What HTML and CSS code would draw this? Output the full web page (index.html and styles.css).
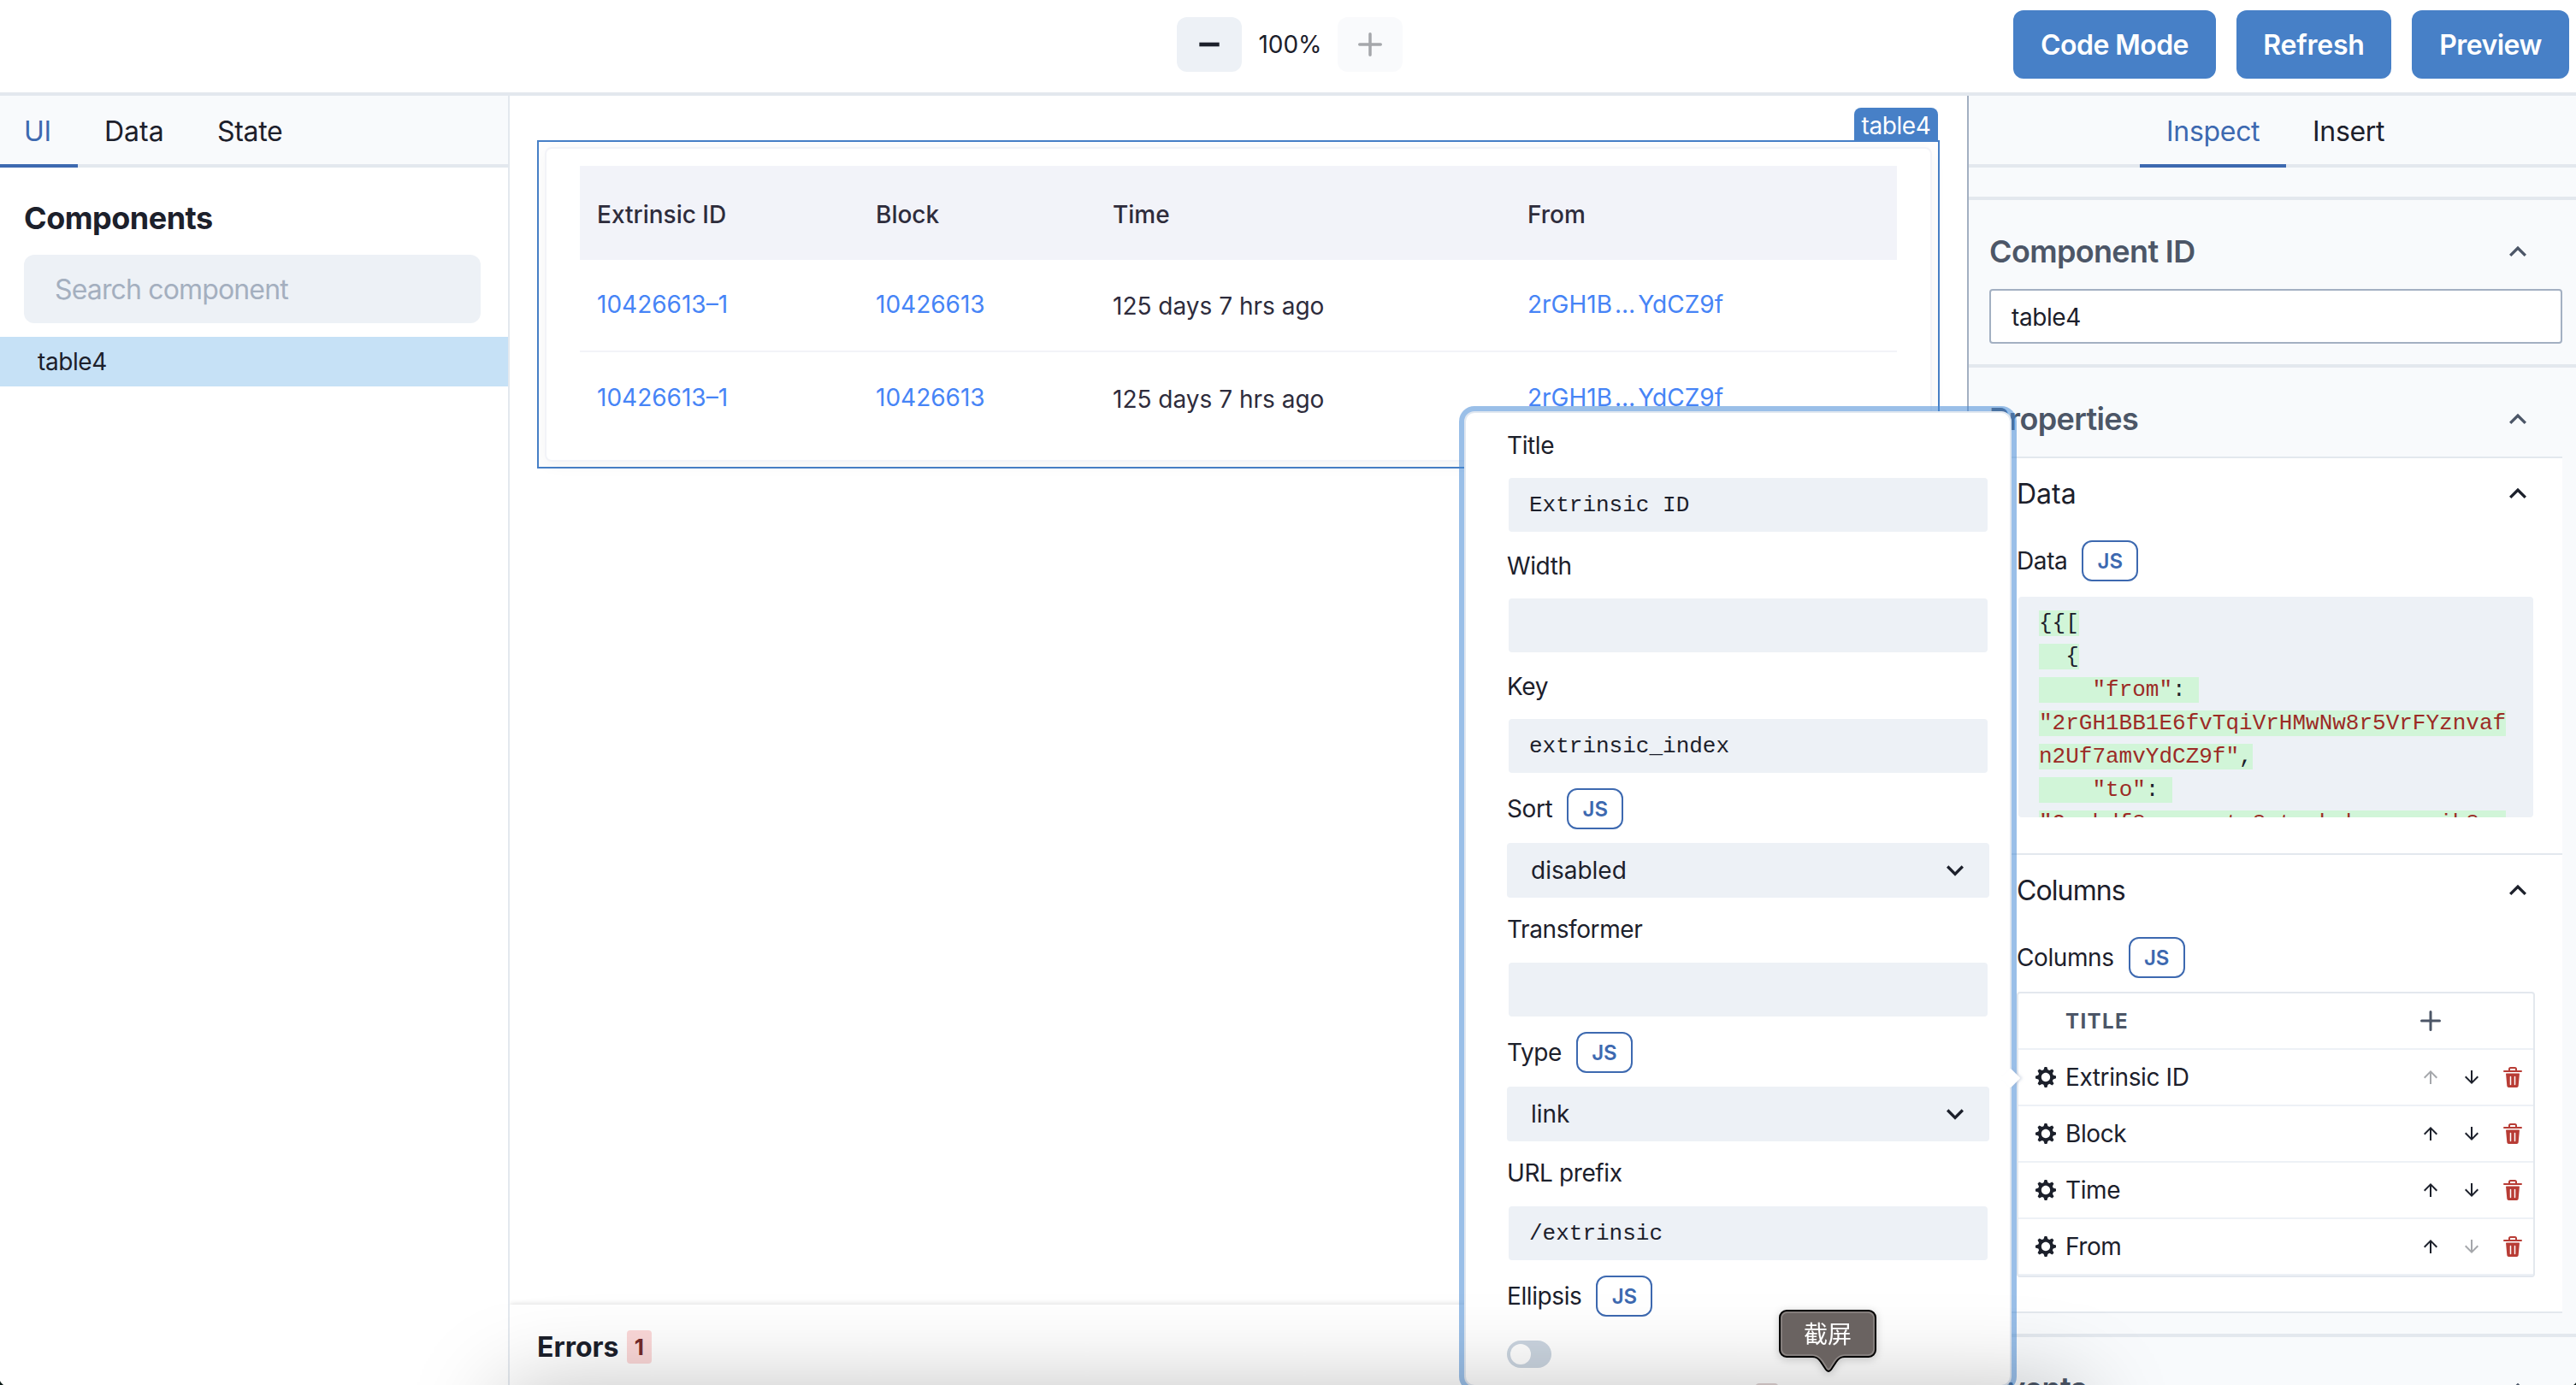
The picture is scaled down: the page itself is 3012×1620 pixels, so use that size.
FILE: index.html
```html
<!DOCTYPE html>
<html lang="en">
<head>
    <meta charset="UTF-8">
    <meta name="viewport" content="width=device-width, initial-scale=1.0">
    <title>Editor</title>
    <link rel="stylesheet" href="styles.css">
</head>
<body>
    <svg class="sprite" width="0" height="0">
        <symbol id="chevron-up" viewBox="0 0 24 24"><path d="M12 8.2l-6 6 1.41 1.41L12 11.03l4.59 4.58L18 14.2z"/></symbol>
        <symbol id="chevron-down" viewBox="0 0 24 24"><path d="M16.59 8.59L12 13.17 7.41 8.59 6 10l6 6 6-6z"/></symbol>
        <symbol id="plus" viewBox="0 0 24 24"><path d="M0,12a1.5,1.5,0,0,0,1.5,1.5h8.75a.25.25,0,0,1,.25.25V22.5a1.5,1.5,0,0,0,3,0V13.75a.25.25,0,0,1,.25-.25H22.5a1.5,1.5,0,0,0,0-3H13.75a.25.25,0,0,1-.25-.25V1.5a1.5,1.5,0,0,0-3,0v8.75a.25.25,0,0,1-.25.25H1.5A1.5,1.5,0,0,0,0,12Z"/></symbol>
        <symbol id="minus" viewBox="0 0 24 24"><rect x="2" y="10" width="20" height="4"/></symbol>
        <symbol id="arrow-up" viewBox="0 0 24 24"><path d="M4 12l1.41 1.41L11 7.83V20h2V7.83l5.58 5.59L20 12l-8-8-8 8z"/></symbol>
        <symbol id="arrow-down" viewBox="0 0 24 24"><path d="M20 12l-1.41-1.41L13 16.17V4h-2v12.17l-5.58-5.59L4 12l8 8 8-8z"/></symbol>
        <symbol id="gear" viewBox="0 0 14 14"><path fill-rule="evenodd" d="M14,7.77 L14,6.17 L12.06,5.53 L11.61,4.44 L12.49,2.6 L11.36,1.47 L9.55,2.38 L8.46,1.93 L7.77,0.01 L6.17,0.01 L5.54,1.95 L4.43,2.4 L2.59,1.52 L1.46,2.65 L2.37,4.46 L1.92,5.55 L0,6.23 L0,7.82 L1.94,8.46 L2.39,9.55 L1.51,11.39 L2.64,12.52 L4.45,11.61 L5.54,12.06 L6.23,13.98 L7.82,13.98 L8.45,12.04 L9.56,11.59 L11.4,12.47 L12.53,11.34 L11.61,9.53 L12.08,8.44 L14,7.75 Z M7,10 C5.34,10 4,8.66 4,7 C4,5.34 5.34,4 7,4 C8.66,4 10,5.34 10,7 C10,8.66 8.66,10 7,10 Z"/></symbol>
        <symbol id="trash" viewBox="0 0 24 24"><path d="M19.452 7.5H4.547a.5.5 0 00-.5.545l1.287 14.136A2 2 0 007.326 24h9.347a2 2 0 001.992-1.819L19.95 8.045a.5.5 0 00-.129-.382.5.5 0 00-.369-.163zm-9.2 13a.75.75 0 01-1.5 0v-9a.75.75 0 011.5 0zm5 0a.75.75 0 01-1.5 0v-9a.75.75 0 011.5 0zM22 4h-4.75a.25.25 0 01-.25-.25V2.5A2.5 2.5 0 0014.5 0h-5A2.5 2.5 0 007 2.5v1.25a.25.25 0 01-.25.25H2a1 1 0 000 2h20a1 1 0 000-2zM9 3.75V2.5a.5.5 0 01.5-.5h5a.5.5 0 01.5.5v1.25a.25.25 0 01-.25.25h-5.5A.25.25 0 019 3.75z"/></symbol>
    </svg>

    <header class="header">
        <div class="zoom">
            <button class="zoom-btn"><svg class="icon-28"><use href="#minus"/></svg></button>
            <span class="zoom-value">100%</span>
            <button class="zoom-btn disabled"><svg class="icon-28"><use href="#plus"/></svg></button>
        </div>
        <div class="actions">
            <button class="btn btn-code">Code Mode</button>
            <button class="btn btn-refresh">Refresh</button>
            <button class="btn btn-preview">Preview</button>
        </div>
    </header>

    <div class="workspace">
        <aside class="left-panel">
            <nav class="tabs">
                <a class="tab tab-ui active">UI</a>
                <a class="tab tab-data">Data</a>
                <a class="tab">State</a>
            </nav>
            <h2 class="panel-title">Components</h2>
            <div class="search">Search component</div>
            <div class="tree-item">table4</div>
        </aside>

        <main class="canvas">
            <div class="component">
                <span class="component-tag">table4</span>
                <div class="card">
                    <table class="data-table">
                        <thead>
                            <tr><th class="col-id">Extrinsic ID</th><th class="col-block">Block</th><th class="col-time">Time</th><th>From</th></tr>
                        </thead>
                        <tbody>
                            <tr><td><a>10426613–1</a></td><td><a>10426613</a></td><td>125 days 7 hrs ago</td><td><a class="hash">2rGH1B<i>…</i>YdCZ9f</a></td></tr>
                            <tr><td><a>10426613–1</a></td><td><a>10426613</a></td><td>125 days 7 hrs ago</td><td><a class="hash">2rGH1B<i>…</i>YdCZ9f</a></td></tr>
                        </tbody>
                    </table>
                </div>
            </div>
            <div class="errors">
                <span class="errors-title">Errors</span>
                <span class="errors-count">1</span>
            </div>
        </main>

        <aside class="right-panel">
            <nav class="tabs tabs-right">
                <a class="tab tab-inspect active">Inspect</a>
                <a class="tab tab-insert">Insert</a>
            </nav>
            <section class="section section-first">
                <h3 class="section-head">Component ID <svg class="icon-40"><use href="#chevron-up"/></svg></h3>
                <div class="id-input">table4</div>
            </section>
            <section class="section section-props">
                <h3 class="section-head">Properties <svg class="icon-40"><use href="#chevron-up"/></svg></h3>
                <div class="props">
                    <div class="prop">
                        <h4 class="prop-head">Data <svg class="icon-40"><use href="#chevron-up"/></svg></h4>
                        <div class="label-row prop-label">Data <button class="js-btn">JS</button></div>
                        <div class="code">
                            <pre><mark>{{[</mark></pre>
                            <pre><mark>  {</mark></pre>
                            <pre><mark>    <b>"from"</b>: </mark></pre>
                            <pre><mark><b>"2rGH1BB1E6fvTqiVrHMwNw8r5VrFYznvaf</b></mark></pre>
                            <pre><mark><b>n2Uf7amvYdCZ9f"</b>,</mark></pre>
                            <pre><mark>    <b>"to"</b>: </mark></pre>
                            <pre><mark><b>"2rxhdf8arxwnqtm8wtqrbvhxunmsaib8xq</b></mark></pre>
                        </div>
                    </div>
                    <div class="prop prop-columns">
                        <h4 class="prop-head">Columns <svg class="icon-40"><use href="#chevron-up"/></svg></h4>
                        <div class="label-row prop-label">Columns <button class="js-btn">JS</button></div>
                        <div class="columns">
                            <div class="col-row col-head"><span></span><span>TITLE</span><svg class="icon-24"><use href="#plus"/></svg></div>
                            <div class="col-row">
                                <svg class="icon-24"><use href="#gear"/></svg><span>Extrinsic ID</span>
                                <svg class="icon-24 off"><use href="#arrow-up"/></svg><svg class="icon-24"><use href="#arrow-down"/></svg><svg class="icon-24 del"><use href="#trash"/></svg>
                            </div>
                            <div class="col-row">
                                <svg class="icon-24"><use href="#gear"/></svg><span>Block</span>
                                <svg class="icon-24"><use href="#arrow-up"/></svg><svg class="icon-24"><use href="#arrow-down"/></svg><svg class="icon-24 del"><use href="#trash"/></svg>
                            </div>
                            <div class="col-row">
                                <svg class="icon-24"><use href="#gear"/></svg><span>Time</span>
                                <svg class="icon-24"><use href="#arrow-up"/></svg><svg class="icon-24"><use href="#arrow-down"/></svg><svg class="icon-24 del"><use href="#trash"/></svg>
                            </div>
                            <div class="col-row">
                                <svg class="icon-24"><use href="#gear"/></svg><span>From</span>
                                <svg class="icon-24"><use href="#arrow-up"/></svg><svg class="icon-24 off"><use href="#arrow-down"/></svg><svg class="icon-24 del"><use href="#trash"/></svg>
                            </div>
                        </div>
                    </div>
                </div>
            </section>
            <section class="section">
                <h3 class="section-head">Events <svg class="icon-40"><use href="#chevron-up"/></svg></h3>
            </section>
        </aside>
    </div>

    <div class="popover">
        <label class="label">Title</label>
        <div class="field">Extrinsic ID</div>
        <label class="label">Width</label>
        <div class="field"></div>
        <label class="label">Key</label>
        <div class="field">extrinsic_index</div>
        <div class="label-row">Sort <button class="js-btn">JS</button></div>
        <div class="select">disabled <svg class="icon-40"><use href="#chevron-down"/></svg></div>
        <label class="label">Transformer</label>
        <div class="field"></div>
        <div class="label-row">Type <button class="js-btn">JS</button></div>
        <div class="select">link <svg class="icon-40"><use href="#chevron-down"/></svg></div>
        <label class="label">URL prefix</label>
        <div class="field">/extrinsic</div>
        <div class="label-row">Ellipsis <button class="js-btn">JS</button></div>
        <div class="switch"></div>
        <span class="popover-arrow"></span>
    </div>

    <div class="dock-shadow"></div>
    <div class="dock-icon"></div>
    <div class="dock-tip">
        <svg class="dock-tip-shape" viewBox="0 0 114 74">
            <path d="M9 1H105a8 8 0 0 1 8 8V47a8 8 0 0 1-8 8H77C72 55 70 57 67 61L61 70Q58 74 55 70L49 61C46 57 44 55 39 55H9a8 8 0 0 1-8-8V9a8 8 0 0 1 8-8z" fill="#6a6361" stroke="#000" stroke-width="2"/>
            <path d="M10 3H104a7 7 0 0 1 7 7V46a7 7 0 0 1-7 7H77C71 53 68 56 65 60L60 68Q58 71 56 68L51 60C48 56 45 53 39 53H10a7 7 0 0 1-7-7V10a7 7 0 0 1 7-7z" fill="none" stroke="#8c8684" stroke-width="1.5"/>
        </svg>
        <span class="dock-tip-text">截屏</span>
    </div>
    <div class="corner"></div>
    <div class="corner corner-right"></div>
</body>
</html>
```
FILE: styles.css
```css
* {
    box-sizing: border-box;
}
html {
    overflow: hidden;
}
body {
    margin: 0;
    width: 3012px;
    height: 1620px;
    overflow: hidden;
    position: relative;
    display: flex;
    flex-direction: column;
    background: #fff;
    color: #1c202b;
    font-family: Inter, "Noto Sans CJK SC", sans-serif;
    font-size: 28px;
    letter-spacing: -0.4px;
}
h2, h3, h4, pre {
    margin: 0;
}
pre {
    font: inherit;
}
button {
    padding: 0;
    border: none;
    font-family: inherit;
    color: inherit;
}
svg {
    display: block;
    flex: none;
    fill: currentColor;
}
.sprite {
    position: absolute;
}
.icon-24 {
    width: 24px;
    height: 24px;
}
.icon-28 {
    width: 28px;
    height: 28px;
}
.icon-40 {
    width: 40px;
    height: 40px;
}

/* header */
.header {
    flex: none;
    height: 112px;
    padding: 0 8px 4px 1376px;
    display: flex;
    align-items: center;
    justify-content: space-between;
    border-bottom: 4px solid #e3e8ee;
}
.zoom {
    display: flex;
    align-items: center;
    width: 264px;
}
.zoom-btn {
    width: 76px;
    height: 64px;
    display: flex;
    align-items: center;
    justify-content: center;
    border-radius: 12px;
    background: #edf1f6;
}
.zoom-btn.disabled {
    background: #f9fafc;
    color: #a5a7ab;
}
.zoom-value {
    flex: 1;
    padding-left: 1px;
    text-align: center;
    letter-spacing: 0;
}
.actions {
    display: flex;
    gap: 24px;
}
.btn {
    height: 80px;
    border-radius: 12px;
    background: #4780c7;
    color: #fff;
    font-size: 32px;
    font-weight: 600;
    letter-spacing: -0.55px;
}
.btn-code {
    width: 237px;
}
.btn-refresh {
    width: 181px;
    letter-spacing: -0.2px;
}
.btn-preview {
    width: 184px;
}

.workspace {
    flex: 1;
    min-height: 0;
    display: grid;
    grid-template-columns: 596px 1704px 712px;
}

/* tabs */
.tabs {
    flex: none;
    height: 84px;
    display: flex;
    background: #f8fafc;
    border-bottom: 4px solid #e3e8ee;
    font-size: 32px;
}
.tab {
    height: 84px;
    padding: 2px 0 0 31px;
    display: flex;
    align-items: center;
    border-bottom: 4px solid transparent;
    letter-spacing: -0.3px;
}
.tab.active {
    color: #3d69b0;
    border-color: #3d69b0;
}
.tab-ui {
    width: 91px;
    padding-left: 28px;
}
.tab-data {
    width: 132px;
    letter-spacing: 0;
}
.tabs-right {
    padding-left: 200px;
}
.tab-inspect {
    width: 171px;
}

/* left panel */
.left-panel {
    border-right: 2px solid #e3e8ee;
}
.panel-title {
    padding: 37px 0 20px 28px;
    font-size: 36px;
    line-height: 45px;
    letter-spacing: -0.5px;
}
.search {
    margin: 0 32px 16px 28px;
    height: 80px;
    padding-left: 36px;
    border-radius: 12px;
    background: #edf1f6;
    color: #a4afbf;
    font-size: 32px;
    line-height: 82px;
    letter-spacing: -0.85px;
}
.tree-item {
    height: 58px;
    padding-left: 44px;
    background: #c6e1f6;
    line-height: 58px;
}

/* canvas */
.canvas {
    min-width: 0;
    height: 1508px;
    display: flex;
    flex-direction: column;
    justify-content: space-between;
    padding-top: 52px;
}
.component {
    position: relative;
    margin: 0 32px;
    height: 384px;
    padding: 6px 7px;
    border: 2px solid #4780c7;
    background: #fefefe;
}
.component-tag {
    position: absolute;
    right: 0;
    bottom: 380px;
    width: 98px;
    height: 40px;
    border-radius: 8px 8px 0 0;
    background: #4780c7;
    color: #fff;
    line-height: 42px;
    text-align: center;
}
.card {
    height: 368px;
    padding: 20px 39px 0;
    border: 2px solid #f2f3f8;
    border-radius: 8px;
    background: #fff;
    box-shadow: 0 4px 20px rgba(0, 0, 0, 0.04);
}
.data-table {
    width: 1540px;
    border-collapse: separate;
    border-spacing: 0;
    table-layout: fixed;
    color: #2e2c3c;
    letter-spacing: 0;
    text-align: left;
}
.data-table th {
    height: 110px;
    padding: 4px 0 0 20px;
    background: #f2f3f9;
    font-weight: 500;
}
.data-table td {
    height: 108px;
    padding: 2px 0 0 20px;
    border-bottom: 2px solid #f2f3f8;
}
.data-table tr:last-child td {
    border-bottom: none;
}
.data-table a {
    display: block;
    margin-top: -4px;
    color: #4684f6;
}
.data-table i {
    font-style: normal;
    letter-spacing: 3px;
    margin-left: 3px;
}
.data-table .col-id {
    width: 326px;
}
.data-table .col-block {
    width: 277px;
}
.data-table .col-time {
    width: 485px;
}
.errors {
    height: 94px;
    padding: 4px 0 0 32px;
    display: flex;
    align-items: center;
    gap: 9px;
    background: #fff;
    box-shadow: 0 -1px 6px rgba(0, 0, 0, 0.12);
    clip-path: inset(-20px 0 0 0);
}
.errors-title {
    font-size: 32px;
    font-weight: 700;
    letter-spacing: 0;
}
.errors-count {
    width: 29px;
    height: 39px;
    border-radius: 4px;
    background: #fbd8d8;
    color: #742a2a;
    font-size: 26px;
    font-weight: 700;
    line-height: 40px;
    text-align: center;
}

/* right panel */
.right-panel {
    min-width: 0;
    height: 1508px;
    overflow: hidden;
    border-left: 2px solid #a3b0c2;
    background: #f8fafc;
}
.section {
    padding: 16px 16px 0 24px;
    border-top: 4px solid #e3e8ee;
}
.section-first {
    margin-top: 34px;
    padding-bottom: 24px;
}
.section-props {
    padding-bottom: 24px;
}
.section-head {
    height: 88px;
    padding-right: 32px;
    display: flex;
    align-items: center;
    justify-content: space-between;
    color: #4c5667;
    font-size: 36px;
    font-weight: 600;
    letter-spacing: -0.65px;
}
.id-input {
    height: 64px;
    padding-left: 24px;
    border: 2px solid #a3b0c2;
    border-radius: 4px;
    background: #fff;
    line-height: 62px;
}
.props {
    background: #fff;
    border-bottom: 2px solid #e3e8ee;
}
.prop {
    padding: 0 32px 42px;
    border-top: 2px solid #e3e8ee;
}
.prop-columns {
    padding-bottom: 40px;
}
.prop-head {
    height: 82px;
    display: flex;
    align-items: center;
    justify-content: space-between;
    font-size: 32px;
    font-weight: 400;
    letter-spacing: -0.9px;
}
.prop:first-child .prop-head {
    letter-spacing: 0;
}
.label-row {
    height: 48px;
    display: flex;
    align-items: center;
    gap: 17px;
    margin-bottom: 16px;
}
.prop-label {
    margin-top: 14px;
}
.js-btn {
    width: 66px;
    height: 48px;
    border: 2px solid #3d69b0;
    border-radius: 12px;
    background: #fff;
    color: #3d69b0;
    font-size: 24px;
    font-weight: 600;
    letter-spacing: 0;
}
.code {
    height: 258px;
    margin: 18px 2px 0;
    padding: 12px 0 0 24px;
    overflow: hidden;
    border-radius: 4px;
    background: #edf1f6;
    font-family: "Liberation Mono", monospace;
    font-size: 26px;
    line-height: 39px;
    letter-spacing: 0;
}
.code mark {
    background: #d1f5d8;
    color: inherit;
}
.code b {
    color: #9c2b26;
    font-weight: 400;
}
.columns {
    height: 334px;
    border: 2px solid #e3e8ee;
    border-radius: 4px;
}
.col-row {
    height: 66px;
    padding: 0 12px 0 20px;
    display: grid;
    grid-template-columns: 24px 1fr 24px 24px 24px;
    align-items: center;
    column-gap: 24px;
    border-bottom: 2px solid #edf1f6;
}
.col-row span:nth-child(2) {
    margin-left: -13px;
}
.col-head {
    color: #4c5667;
    font-size: 24px;
    font-weight: 700;
    letter-spacing: 1.4px;
}
.off {
    color: #a5a7ab;
}
.del {
    color: #b83c35;
}

/* column editor */
.popover {
    position: absolute;
    left: 1712px;
    top: 481px;
    width: 640px;
    height: 1141px;
    padding: 16px 24px 0 48px;
    border: 2px solid #e0e7f0;
    border-radius: 12px;
    background: #fff;
    box-shadow: 0 0 0 6px rgba(71, 139, 214, 0.55);
}
.popover-arrow {
    position: absolute;
    right: -9px;
    top: 770px;
    width: 16px;
    height: 16px;
    background: #fff;
    box-shadow: 2px -2px 3px rgba(160, 175, 200, 0.35);
    transform: rotate(45deg);
}
.label {
    display: block;
    height: 44px;
    margin-bottom: 16px;
    line-height: 44px;
}
.field {
    height: 63px;
    margin: 0 2px 18px;
    padding-left: 24px;
    border-radius: 4px;
    background: #edf1f6;
    font-family: "Liberation Mono", monospace;
    font-size: 26px;
    line-height: 64px;
    letter-spacing: 0;
}
.select {
    height: 64px;
    margin-bottom: 15px;
    padding: 0 20px 0 28px;
    display: flex;
    align-items: center;
    justify-content: space-between;
    border-radius: 4px;
    background: #edf1f6;
    letter-spacing: 0;
}
.select + .label {
    margin-bottom: 17px;
}
.switch {
    width: 52px;
    height: 32px;
    margin-top: 28px;
    padding: 4px;
    border-radius: 16px;
    background: #cbd5e0;
}
.switch::before {
    content: "";
    display: block;
    width: 24px;
    height: 24px;
    border-radius: 50%;
    background: #fff;
}

/* dock */
.dock-shadow {
    position: absolute;
    left: 590px;
    top: 1628px;
    width: 1840px;
    height: 200px;
    box-shadow: 0 0 110px rgba(0, 0, 0, 0.27);
}
.dock-icon {
    position: absolute;
    left: 2052px;
    top: 1618px;
    width: 28px;
    height: 10px;
    border-radius: 6px;
    background: #c5baba;
}
.dock-tip {
    position: absolute;
    left: 2080px;
    top: 1532px;
    width: 114px;
    height: 74px;
    filter: drop-shadow(0 2px 5px rgba(0, 0, 0, 0.2));
}
.dock-tip-shape {
    position: absolute;
    left: 0;
    top: 0;
    width: 114px;
    height: 74px;
}
.dock-tip-text {
    position: relative;
    display: block;
    color: #fff;
    font-family: "Noto Sans CJK SC", sans-serif;
    line-height: 54px;
    letter-spacing: 0;
    text-align: center;
}
.corner {
    position: absolute;
    left: 0;
    top: 1613px;
    width: 7px;
    height: 7px;
    background: radial-gradient(circle at 12px -4px, transparent 13px, #0b1a16 14px);
}
.corner-right {
    left: 3008px;
    top: 1616px;
    width: 4px;
    height: 4px;
    background: radial-gradient(circle at -4px -4px, transparent 9px, #0b1a16 10px);
}
```
